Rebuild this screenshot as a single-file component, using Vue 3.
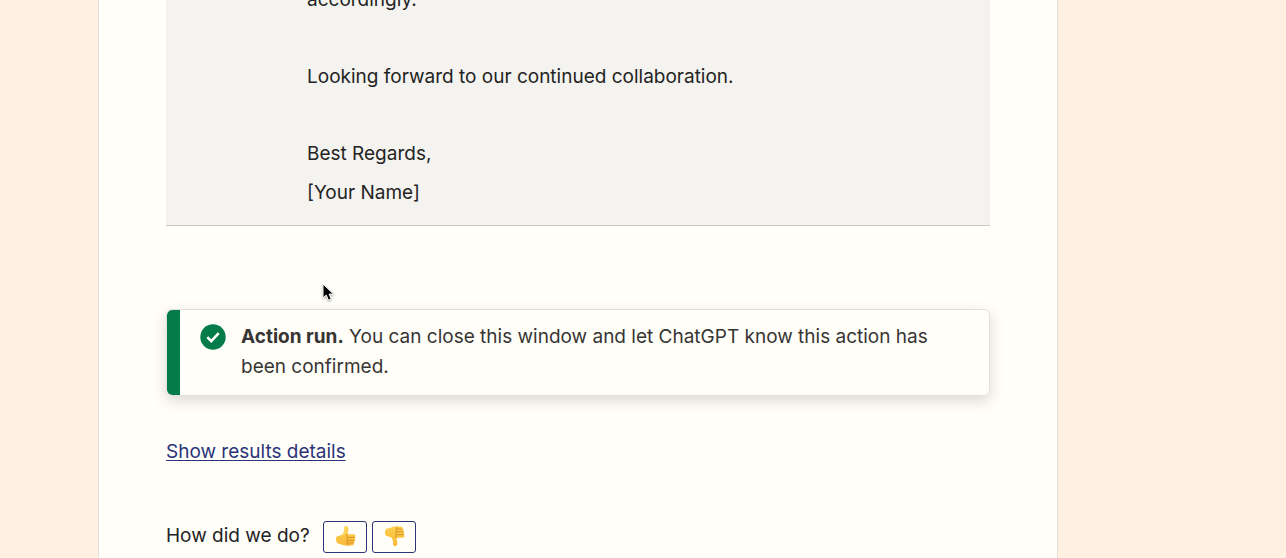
<script setup>
import { ref } from 'vue'

const paragraphs = [
  ['accordingly.'],
  ['Looking forward to our continued collaboration.'],
  ['Best Regards,', '[Your Name]'],
]
const vote = ref('')
</script>

<template>
  <div class="page">
    <main class="card">
      <section class="message">
        <p v-for="(lines, i) in paragraphs" :key="i">
          <span v-for="line in lines" :key="line">{{ line }}</span>
        </p>
      </section>

      <div class="alert" role="status">
        <svg class="check" viewBox="0 0 26 26" aria-hidden="true">
          <circle cx="13" cy="13" r="12.7" fill="#047c4a" />
          <path d="M7.3 13.2l4 4 7.4-8" fill="none" stroke="#fffef9" stroke-width="2.6" />
        </svg>
        <p><strong>Action run.</strong> You can close this window and let ChatGPT know this action has been confirmed.</p>
      </div>

      <a class="details" href="#results">Show results details</a>

      <div class="feedback">
        <span class="question">How did we do?</span>
        <button type="button" aria-label="Thumbs up" @click="vote = 'up'">
          <svg viewBox="0 0 24 24" aria-hidden="true">
            <defs>
              <linearGradient id="skin-up" x1="0" y1="0" x2="0" y2="1">
                <stop offset="0" stop-color="#ffd558" />
                <stop offset="1" stop-color="#f9b835" />
              </linearGradient>
            </defs>
            <path d="M1.5 13.2C2.4 11.6 5 11.8 7 10.8C9 9.5 9.9 7.2 9.9 4.5C9.9 2.2 10.5 1 12 1C14.3 1 14.8 3.5 14.4 6.3L13.7 10H20.4C22.5 10 23 12.6 21.3 13.4C22.8 14.2 22.5 16.2 21 16.7C22.1 17.7 21.6 19.3 20.1 19.6C21 21 20 22.4 18.1 22.4H12C8.6 22.4 6.5 20.4 3.4 20.1C1.4 19.6.5 15.5 1.5 13.2Z" fill="url(#skin-up)" />
            <path d="M13.4 10.2C12.5 11.2 12.5 12.7 13.6 13.4C12.4 14.3 12.5 16 13.7 16.7C12.7 17.7 12.9 19 13.9 19.6C13.2 20.5 13.3 21.5 14 22.2M13.6 13.4H21.2M13.7 16.7H21M13.9 19.6H20" fill="none" stroke="#d08a20" stroke-width=".9" stroke-linecap="round" />
            <path d="M11.4 2.8C11.5 6.5 10.6 9.5 8.3 11.4" fill="none" stroke="#ffe17a" stroke-width="1" stroke-linecap="round" />
          </svg>
        </button>
        <button type="button" aria-label="Thumbs down" @click="vote = 'down'">
          <svg viewBox="0 0 24 24" aria-hidden="true">
            <defs>
              <linearGradient id="skin-down" x1="0" y1="0" x2="0" y2="1">
                <stop offset="0" stop-color="#ffd050" />
                <stop offset="1" stop-color="#f9b835" />
              </linearGradient>
            </defs>
            <path d="M1.5 10.8C2.4 12.4 5 12.2 7 13.2C9 14.5 9.9 16.8 9.9 19.5C9.9 21.8 10.5 23 12 23C14.3 23 14.8 20.5 14.4 17.7L13.7 14H20.4C22.5 14 23 11.4 21.3 10.6C22.8 9.8 22.5 7.8 21 7.3C22.1 6.3 21.6 4.7 20.1 4.4C21 3 20 1.6 18.1 1.6H12C8.6 1.6 6.5 3.6 3.4 3.9C1.4 4.4.5 8.5 1.5 10.8Z" fill="url(#skin-down)" />
            <path d="M13.4 13.8C12.5 12.8 12.5 11.3 13.6 10.6C12.4 9.7 12.5 8 13.7 7.3C12.7 6.3 12.9 5 13.9 4.4C13.2 3.5 13.3 2.5 14 1.8M13.6 10.6H21.2M13.7 7.3H21M13.9 4.4H20" fill="none" stroke="#d08a20" stroke-width=".9" stroke-linecap="round" />
          </svg>
        </button>
      </div>
    </main>

    <svg class="pointer" viewBox="0 0 14 20" aria-hidden="true">
      <path d="M1 1V15L4.3 12.1L6.4 17.2L9.2 16L7.1 11.1H11.5Z" fill="#000" stroke="#fff" stroke-width="1" stroke-linejoin="round" />
    </svg>
  </div>
</template>

<style>
body {
  margin: 0;
  background: #fff0e1;
}
</style>

<style scoped>
.page {
  position: relative;
  height: 100vh;
  overflow: hidden;
  box-sizing: border-box;
  padding: 0 228px 0 98px;
  background: #fff0e1;
  color: #242323;
  font-family: Inter, "Liberation Sans", sans-serif;
  font-size: 19px;
}
.card {
  display: flex;
  flex-direction: column;
  box-sizing: border-box;
  min-height: 100vh;
  padding: 0 67px;
  border: solid #e5dfd9;
  border-width: 0 1px;
  background: #fffef9;
}
p {
  margin: 0;
}
.message {
  display: flex;
  flex-direction: column;
  gap: 38px;
  margin-top: -20px;
  padding: 0 16px 13px 141px;
  border-bottom: 1px solid #cbc9c5;
  background: #f4f3ef;
  line-height: 39px;
}
.message span {
  display: block;
}
.alert {
  display: flex;
  align-items: flex-start;
  gap: 15px;
  margin-top: 83px;
  padding: 12px 56px 13px 33px;
  border: 1px solid #e2e0dc;
  border-radius: 6px;
  background: linear-gradient(to right, #047c4a 13px, #fffef9 13px);
  background-clip: padding-box;
  box-shadow: 0 5px 14px rgba(40, 36, 30, 0.17);
  color: #373533;
  line-height: 30px;
}
.check {
  flex: none;
  width: 26px;
  height: 26px;
  margin-top: 2px;
}
.details {
  align-self: flex-start;
  margin-top: 41px;
  color: #2b3478;
  line-height: 30px;
  text-decoration-thickness: 1px;
  text-underline-offset: 2px;
}
.feedback {
  display: flex;
  align-items: flex-start;
  gap: 5px;
  margin-top: 54px;
}
.question {
  margin-right: 8px;
  line-height: 30px;
}
button {
  display: flex;
  align-items: center;
  justify-content: center;
  box-sizing: border-box;
  width: 44px;
  height: 32px;
  padding: 0 0 2px 2px;
  border: 1px solid #2b3478;
  border-radius: 3px;
  background: #fffef9;
}
button svg {
  width: 22px;
  height: 22px;
}
.pointer {
  position: absolute;
  left: 322px;
  top: 283px;
  width: 14px;
  height: 20px;
  filter: drop-shadow(0 1px 1px rgba(0, 0, 0, 0.35));
}
</style>
